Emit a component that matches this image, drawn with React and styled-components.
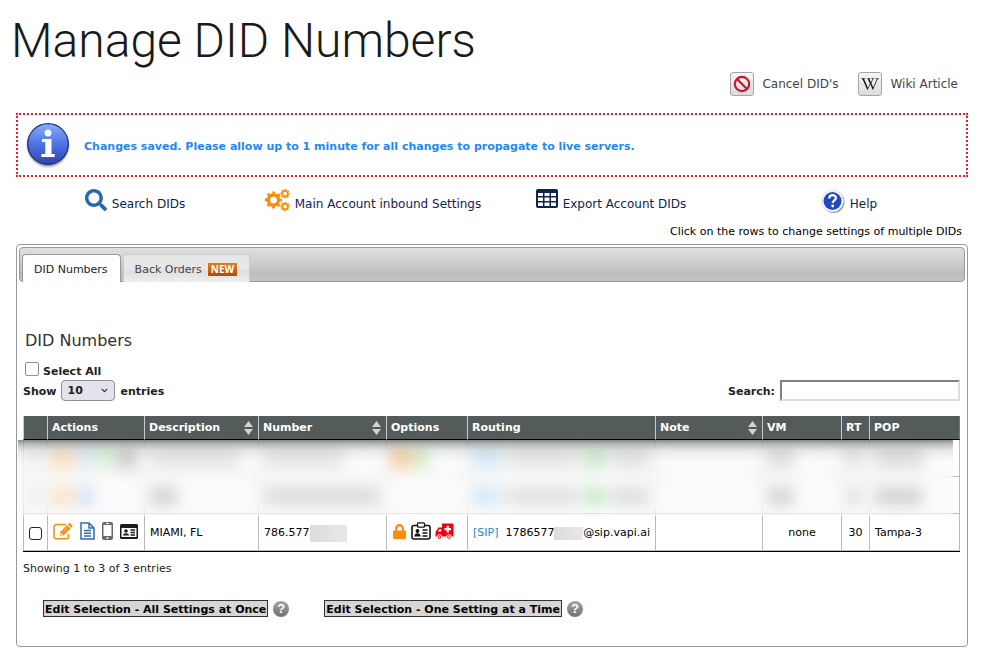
import styled, { createGlobalStyle } from "styled-components";
import { FaSearch, FaWikipediaW, FaLock, FaChevronDown } from "react-icons/fa";

const GlobalStyle = createGlobalStyle`
    * {
        box-sizing: border-box;
    }

    body {
        margin: 0;
        background-color: #fff;
        color: #222;
        font-family: Verdana, "DejaVu Sans", sans-serif;
        font-size: 11px;
        line-height: 16px;
    }

    input, select, button {
        font: inherit;
        color: inherit;
        margin: 0;
    }

    svg {
        display: block;
        flex: none;
    }
`;

const Page = styled.main`
    padding: 11px 34px 14px 16px;
`;

const Title = styled.h1`
    margin: 0 0 1px -5px;
    font-family: Roboto, sans-serif;
    font-size: 48px;
    font-weight: 350;
    line-height: 60px;
    color: #1a1a1a;
`;

const TopActions = styled.nav`
    display: flex;
    justify-content: flex-end;
    gap: 20px;
    padding-right: 10px;
`;

const TopAction = styled.a`
    display: flex;
    align-items: center;
    gap: 8px;
    font-size: 12px;
    color: #444;
    text-decoration: none;
`;

const IconTile = styled.span`
    width: 24px;
    height: 24px;
    display: flex;
    justify-content: center;
    align-items: center;
    border: 1px solid #a5a5a5;
    border-radius: 3px;
    background: linear-gradient(#f6f6f6, #dcdcdc);
    color: #111;
`;

const Notice = styled.section`
    display: flex;
    align-items: center;
    gap: 12px;
    height: 64px;
    margin-top: 17px;
    padding-left: 8px;
    border: 2px dotted #ed1c24;
    color: #1e88ff;
    font-weight: bold;

    span {
        padding-top: 4px;
    }
`;

const Shortcuts = styled.nav`
    display: grid;
    grid-template-columns: repeat(4, 1fr);
    height: 47px;
    padding-top: 12px;
`;

const Shortcut = styled.a`
    display: flex;
    justify-content: center;
    align-items: flex-start;
    gap: 5px;
    font-size: 12px;
    color: #0f2350;
    text-decoration: none;

    span {
        padding-top: 7px;
    }
`;

const Hint = styled.p`
    margin: 0 6px 4px 0;
    text-align: right;
    color: #000;
`;

const Panel = styled.section`
    padding: 2px;
    border: 1px solid #999;
    border-radius: 4px;
`;

const TabBar = styled.div`
    display: flex;
    align-items: flex-end;
    gap: 2px;
    height: 35px;
    padding-left: 2px;
    border: 1px solid #999;
    border-radius: 4px;
    background: linear-gradient(#e0e0e0, #cfcfcf 40%, #bebebe 75%, #c2c2c2);
`;

const Tab = styled.button`
    display: flex;
    align-items: center;
    gap: 6px;
    height: 28px;
    margin-bottom: -1px;
    padding: 2px 12px 0 11px;
    border: 1px solid ${(props) => (props.$active ? "#999" : "#ccc")};
    border-bottom: none;
    border-radius: 4px 4px 0 0;
    background: ${(props) =>
        props.$active ? "#fff" : "linear-gradient(#e7e7e7 55%, #dedede 55%, #ededed)"};
    color: ${(props) => (props.$active ? "#222" : "#444")};
`;

const NewBadge = styled.b`
    padding: 0 3px;
    background: linear-gradient(#e08020, #bd4408);
    color: #fff;
    font-family: "Open Sans", sans-serif;
    font-size: 10px;
    line-height: 13px;
`;

const PanelBody = styled.div`
    padding: 49px 5px 27px 4px;
`;

const Heading = styled.h2`
    margin: 0 0 9px 2px;
    font-size: 16px;
    font-weight: normal;
    line-height: 20px;
    color: #333;
`;

const CheckBox = styled.input`
    appearance: none;
    flex: none;
    width: ${(props) => (props.$small ? 13 : 14)}px;
    height: ${(props) => (props.$small ? 13 : 14)}px;
    border: 1px solid ${(props) => (props.$small ? "#222" : "#8f8f9d")};
    border-radius: ${(props) => (props.$small ? 3 : 2)}px;
    background-color: #fff;

    &:checked {
        background-color: #0060df;
    }
`;

const SelectAll = styled.label`
    display: flex;
    gap: 4px;
    height: 20px;
    padding: 2px 0 0 2px;
    font-weight: bold;

    span {
        padding-top: 2px;
    }
`;

const Controls = styled.div`
    display: flex;
    justify-content: space-between;
    margin-bottom: 15px;
    font-weight: bold;
`;

const Control = styled.label`
    display: flex;
    align-items: center;
    gap: 5px;

    > span {
        padding-top: 2px;
    }
`;

const SelectBox = styled.div`
    position: relative;
    display: flex;

    select {
        appearance: none;
        width: 54px;
        height: 21px;
        padding: 1px 5px 0;
        border: 1px solid #8f8f9d;
        border-radius: 4px;
        background-color: #e4e3ea;
    }

    svg {
        position: absolute;
        right: 7px;
        top: 7px;
        pointer-events: none;
    }
`;

const SearchInput = styled.input`
    width: 180px;
    height: 21px;
    padding: 0 4px;
    border: 2px solid;
    border-color: #808080 #ddd #ddd #808080;
    background-color: #fff;
`;

const TableBox = styled.div`
    position: relative;
`;

const DidTable = styled.table`
    width: 100%;
    table-layout: fixed;
    border-spacing: 0;
    border-bottom: 1px solid #000;
    color: #000;
`;

const HeadCell = styled.th`
    width: ${(props) => props.$width}px;
    height: 24px;
    padding: 1px 5px 0 4px;
    border-left: 1px solid #ccc;
    border-bottom: 1px solid #000;
    background-color: #535c5b;
    color: #fff;
    text-align: left;

    &:last-child {
        border-right: 1px solid #777;
    }
`;

const HeadLabel = styled.span`
    display: flex;
    justify-content: space-between;
    align-items: center;
`;

const Cell = styled.td`
    height: 37px;
    padding: 2px 5px 0;
    border-left: 1px solid #bbb;
    border-bottom: 1px solid #bbb;
    text-align: ${(props) => props.$align || "left"};
    white-space: nowrap;

    &:last-child {
        border-right: 1px solid #bbb;
    }
`;

const CellContent = styled.div`
    display: flex;
    align-items: center;
    gap: ${(props) => props.$gap || 0}px;
`;

const CellIcons = styled(CellContent)`
    padding-bottom: 4px;
`;

const Smear = styled.span`
    display: block;
    flex: none;
    width: ${(props) => props.$width}px;
    height: 16px;
    background-color: ${(props) => props.$color || "#bbb"};
`;

const Redaction = styled.div`
    position: absolute;
    top: 24px;
    left: -5px;
    right: 7px;
    height: 76px;
    background: linear-gradient(
        rgba(90, 98, 96, 0.7),
        rgba(120, 126, 124, 0.4) 5px,
        rgba(190, 194, 192, 0.3) 11px,
        rgba(245, 245, 245, 0.3) 22px,
        rgba(250, 250, 250, 0.3)
    );
    backdrop-filter: blur(8px);
`;

const Mask = styled.span`
    width: ${(props) => props.$width}px;
    height: ${(props) => props.$height}px;
    background: linear-gradient(90deg, #dcdcdc, #e8e8e8);
`;

const SipLink = styled.a`
    margin-right: 7px;
    color: #2a86c8;
    text-decoration: none;
`;

const Summary = styled.p`
    margin: 9px 0 23px;
`;

const BulkActions = styled.div`
    display: flex;
    gap: 35px;
    padding-left: 20px;
`;

const BulkAction = styled.div`
    display: flex;
    align-items: center;
    gap: 5px;
`;

const EditButton = styled.button`
    height: 17px;
    padding: 1px 1px 0;
    border: 1px solid #333;
    background-color: #d6d6d6;
    color: #000;
    font-weight: bold;
    line-height: 15px;
`;

const HelpButton = styled.button`
    width: 16px;
    height: 16px;
    padding: 0;
    border: none;
    border-radius: 50%;
    background: linear-gradient(#a5a5a5, #707074);
    color: #fff;
    font-family: "Liberation Sans", sans-serif;
    font-size: 13px;
    font-weight: bold;
    line-height: 16px;
`;

const InfoIcon = () => (
    <svg width="46" height="48" viewBox="0 0 46 48">
        <defs>
            <linearGradient id="info" x1="0" y1="0" x2="0" y2="1">
                <stop offset="0" stopColor="#86aefb" />
                <stop offset="0.5" stopColor="#4f74e4" />
                <stop offset="1" stopColor="#2f44b0" />
            </linearGradient>
            <filter id="soft" x="-20%" y="-20%" width="140%" height="140%">
                <feGaussianBlur stdDeviation="1.2" />
            </filter>
        </defs>
        <circle cx="22" cy="25" r="20.5" fill="#555" filter="url(#soft)" opacity="0.7" />
        <circle cx="22" cy="23" r="20.3" fill="url(#info)" stroke="#1f2f7c" strokeWidth="1.3" />
        <circle cx="22" cy="12" r="3.4" fill="#fff" />
        <path d="M16 18h9.5v15h3.200v3H15.400v-3h3.900V21H16z" fill="#fff" />
    </svg>
);

const CancelIcon = () => (
    <svg width="18" height="18" viewBox="0 0 18 18" fill="none" stroke="#d0142c" strokeWidth="2.2">
        <circle cx="9" cy="9" r="7.2" />
        <path d="M4 4l10 10" />
    </svg>
);

const Gear = ({ x, y, r }) => {
    const tooth = (Math.PI * r * 0.88) / 8;
    return (
        <g transform={`translate(${x} ${y}) rotate(-11)`}>
            <circle r={r * 0.6} strokeWidth={r * 0.4} />
            <circle r={r * 0.88} strokeWidth={r * 0.24} strokeDasharray={tooth} />
        </g>
    );
};

const CogsIcon = () => (
    <svg width="25" height="23" viewBox="0 0 25 23" fill="none" stroke="#fb8c0c">
        <Gear x={8.5} y={11} r={8.5} />
        <Gear x={20} y={4.700} r={4.700} />
        <Gear x={20} y={17.500} r={4.700} />
    </svg>
);

const TableIcon = () => (
    <svg width="22" height="19" viewBox="0 0 22 19">
        <rect width="22" height="19" rx="2" fill="#0f2350" />
        <path
            d="M2 4h5v3H2zM8.5 4h5v3h-5zM15 4h5v3h-5zM2 8.5h5v3.500H2zM8.500 8.500h5v3.500h-5zM15 8.500h5v3.500h-5zM2 13.500h5v3.500H2zM8.500 13.500h5v3.500h-5zM15 13.500h5v3.500h-5z"
            fill="#fff"
        />
    </svg>
);

const HelpIcon = () => (
    <svg width="24" height="25" viewBox="0 0 24 25">
        <circle cx="12.500" cy="13" r="11" fill="#8b8b8b" />
        <circle cx="11.500" cy="12" r="11" fill="#f4f7ff" stroke="#c9d4e6" strokeWidth="0.600" />
        <circle cx="11.500" cy="12" r="9" fill="#2249bf" />
        <path
            d="M8.300 9.400c0-4.200 6.600-4.200 6.600-0.300 0 2.500-3.200 2.300-3.200 5"
            fill="none"
            stroke="#fff"
            strokeWidth="2.200"
        />
        <circle cx="11.700" cy="17" r="1.400" fill="#fff" />
    </svg>
);

const SortIcon = () => (
    <svg width="9" height="16" viewBox="0 0 9 16" fill="#d3d3d3">
        <path d="M4.500 1L9 7H0zM4.500 15L0 9h9z" />
    </svg>
);

const EditIcon = () => (
    <svg width="20" height="17" viewBox="0 0 20 17">
        <path
            d="M13 1.500H3.500a2.500 2.500 0 0 0-2.500 2.500v9.300a2.500 2.500 0 0 0 2.500 2.500h9.500a2.500 2.500 0 0 0 2.500-2.500V11"
            fill="none"
            stroke="#fb8c0c"
            strokeWidth="1.500"
        />
        <path d="M7 9l7-7 3.500 3.500-7 7H7zM14.800 1.200l1-1q0.700-0.400 1.400 0L19.300 2.300q0.500 0.700 0 1.400l-1 1z" fill="#fb8c0c" />
        <path d="M8 9.800v1.700h1.800" fill="none" stroke="#fff" />
        <path d="M10 8.700l4.500-4.500" stroke="#fff" strokeWidth="0.600" />
    </svg>
);

const FileIcon = () => (
    <svg width="15" height="18" viewBox="0 0 15 18" fill="none" stroke="#2c6cb8" strokeWidth="1.500">
        <path d="M1 1h8l5 5v11H1zM9 1v5h5M4 8.500h7M4 11.300h7M4 14h7" />
    </svg>
);

const PhoneIcon = () => (
    <svg width="11" height="18" viewBox="0 0 11 18">
        <rect width="11" height="18" rx="2" fill="#6b6b6b" />
        <path d="M1.500 3h8v11h-8z" fill="#fff" />
        <path d="M4 1.500h3" stroke="#fff" />
        <circle cx="5.500" cy="16" r="1" fill="#fff" />
    </svg>
);

const ContactIcon = () => (
    <svg width="18" height="15" viewBox="0 0 18 15">
        <rect width="18" height="15" rx="1.500" fill="#1b1b1b" />
        <path d="M1.500 4h15v9h-15z" fill="#fff" />
        <circle cx="6" cy="7" r="1.800" fill="#1b1b1b" />
        <path d="M3 11.500c0-3 6-3 6 0z" fill="#1b1b1b" />
        <path d="M10.500 6h4.500M10.500 8.500h4.500M10.500 11h4.500" stroke="#1b1b1b" strokeWidth="1.300" />
    </svg>
);

const BadgeIcon = () => (
    <svg width="20" height="18" viewBox="0 0 20 18">
        <rect x="1" y="3.500" width="18" height="13.500" rx="2" fill="#fff" stroke="#111" strokeWidth="1.600" />
        <rect x="6.500" y="0.800" width="7" height="4.400" rx="1" fill="#fff" stroke="#111" strokeWidth="1.300" />
        <circle cx="6.500" cy="9" r="1.900" fill="#111" />
        <path d="M3.300 14.500c0-4.500 6.400-4.500 6.400 0z" fill="#111" />
        <path d="M11.500 8h5M11.500 11h5M11.500 14h5" stroke="#111" strokeWidth="1.300" />
    </svg>
);

const AmbulanceIcon = () => (
    <svg width="19" height="18" viewBox="0 0 19 18" fill="#f3000f">
        <path d="M7 1.500h11.500v13H0.500V10L3.500 5.500H7z" />
        <path d="M2.800 9.500L4.600 7h1.600v2.500zM11.600 3.800h2.200v2.200h2.200v2.200h-2.200v2.200h-2.200V8.200H9.400V6h2.200z" fill="#fff" />
        <circle cx="4.500" cy="15" r="2.300" stroke="#fff" />
        <circle cx="14" cy="15" r="2.300" stroke="#fff" />
        <circle cx="4.500" cy="15" r="0.900" fill="#fff" />
        <circle cx="14" cy="15" r="0.900" fill="#fff" />
    </svg>
);

const columns = [
    { name: "", width: 24 },
    { name: "Actions", width: 97 },
    { name: "Description", width: 114, sortable: true },
    { name: "Number", width: 128, sortable: true },
    { name: "Options", width: 81 },
    { name: "Routing", width: 188 },
    { name: "Note", width: 107, sortable: true },
    { name: "VM", width: 79 },
    { name: "RT", width: 28 },
    { name: "POP", width: 91 },
];

// Each cell is a list of [width, colour] blocks
const hiddenRows = [
    [
        [[13, "#e4e4e4"]],
        [[20, "#fbc98a"], [14, "#b4d0f0"], [14, "#b0e4a8"], [16, "#999"]],
        [[90, "#d8d8d8"]],
        [[80, "#d8d8d8"]],
        [[18, "#f2a848"], [10, "#98d870"]],
        [[28, "#b8dcf6"], [72, "#d8d8d8"], [20, "#a0dca0"], [38, "#d4d4d4"]],
        [],
        [[26, "#ccc"]],
        [[14, "#ccc"]],
        [[48, "#ccc"]],
    ],
    [
        [[13, "#e0e0e0"]],
        [[20, "#fbd09a"], [14, "#a8c8ee"]],
        [[28, "#bbb"]],
        [[116, "#c8c8c8"]],
        [],
        [[28, "#b8dcf6"], [72, "#d0d0d0"], [20, "#a0dca0"], [38, "#ccc"]],
        [],
        [[26, "#bbb"]],
        [[14, "#ccc"]],
        [[48, "#bbb"]],
    ],
];

const App = () => {
    return (
        <>
            <GlobalStyle />
            <Page>
                <Title>Manage DID Numbers</Title>
                <TopActions>
                    <TopAction href="#cancel">
                        <IconTile>
                            <CancelIcon />
                        </IconTile>
                        Cancel DID's
                    </TopAction>
                    <TopAction href="#wiki">
                        <IconTile>
                            <FaWikipediaW size={18} />
                        </IconTile>
                        Wiki Article
                    </TopAction>
                </TopActions>
                <Notice>
                    <InfoIcon />
                    <span>
                        Changes saved. Please allow up to 1 minute for all changes to propagate to live servers.
                    </span>
                </Notice>
                <Shortcuts>
                    <Shortcut href="#search">
                        <FaSearch size={22} color="#2868ad" />
                        <span>Search DIDs</span>
                    </Shortcut>
                    <Shortcut href="#settings">
                        <CogsIcon />
                        <span>Main Account inbound Settings</span>
                    </Shortcut>
                    <Shortcut href="#export">
                        <TableIcon />
                        <span>Export Account DIDs</span>
                    </Shortcut>
                    <Shortcut href="#help">
                        <HelpIcon />
                        <span>Help</span>
                    </Shortcut>
                </Shortcuts>
                <Hint>Click on the rows to change settings of multiple DIDs</Hint>
                <Panel>
                    <TabBar>
                        <Tab type="button" $active>
                            DID Numbers
                        </Tab>
                        <Tab type="button">
                            Back Orders <NewBadge>NEW</NewBadge>
                        </Tab>
                    </TabBar>
                    <PanelBody>
                        <Heading>DID Numbers</Heading>
                        <SelectAll>
                            <CheckBox type="checkbox" />
                            <span>Select All</span>
                        </SelectAll>
                        <Controls>
                            <Control>
                                <span>Show</span>
                                <SelectBox>
                                    <select defaultValue="10">
                                        <option>10</option>
                                        <option>25</option>
                                        <option>50</option>
                                    </select>
                                    <FaChevronDown size={7} />
                                </SelectBox>
                                <span>entries</span>
                            </Control>
                            <Control>
                                <span>Search:</span>
                                <SearchInput type="text" />
                            </Control>
                        </Controls>
                        <TableBox>
                            <DidTable>
                                <thead>
                                    <tr>
                                        {columns.map((column) => (
                                            <HeadCell key={column.name} $width={column.width}>
                                                <HeadLabel>
                                                    {column.name}
                                                    {column.sortable && <SortIcon />}
                                                </HeadLabel>
                                            </HeadCell>
                                        ))}
                                    </tr>
                                </thead>
                                <tbody>
                                    {hiddenRows.map((row, rowIndex) => (
                                        <tr key={rowIndex}>
                                            {row.map((blocks, cellIndex) => (
                                                <Cell key={cellIndex} $align="center">
                                                    <CellContent $gap={6}>
                                                        {blocks.map(([width, color], index) => (
                                                            <Smear key={index} $width={width} $color={color} />
                                                        ))}
                                                    </CellContent>
                                                </Cell>
                                            ))}
                                        </tr>
                                    ))}
                                    <tr>
                                        <Cell>
                                            <CellContent>
                                                <CheckBox type="checkbox" aria-label="MIAMI, FL" $small />
                                            </CellContent>
                                        </Cell>
                                        <Cell>
                                            <CellIcons $gap={7}>
                                                <EditIcon />
                                                <FileIcon />
                                                <PhoneIcon />
                                                <ContactIcon />
                                            </CellIcons>
                                        </Cell>
                                        <Cell>MIAMI, FL</Cell>
                                        <Cell>
                                            <CellContent>
                                                786.577
                                                <Mask $width={37} $height={17} />
                                            </CellContent>
                                        </Cell>
                                        <Cell>
                                            <CellIcons $gap={4}>
                                                <FaLock size={15} color="#fb8c0c" />
                                                <BadgeIcon />
                                                <AmbulanceIcon />
                                            </CellIcons>
                                        </Cell>
                                        <Cell>
                                            <CellContent>
                                                <SipLink href="#sip">[SIP]</SipLink>
                                                1786577
                                                <Mask $width={30} $height={13} />
                                                @sip.vapi.ai
                                            </CellContent>
                                        </Cell>
                                        <Cell />
                                        <Cell $align="center">none</Cell>
                                        <Cell $align="center">30</Cell>
                                        <Cell>Tampa-3</Cell>
                                    </tr>
                                </tbody>
                            </DidTable>
                            <Redaction />
                        </TableBox>
                        <Summary>Showing 1 to 3 of 3 entries</Summary>
                        <BulkActions>
                            <BulkAction>
                                <EditButton type="button">Edit Selection - All Settings at Once</EditButton>
                                <HelpButton type="button">?</HelpButton>
                            </BulkAction>
                            <BulkAction>
                                <EditButton type="button">Edit Selection - One Setting at a Time</EditButton>
                                <HelpButton type="button">?</HelpButton>
                            </BulkAction>
                        </BulkActions>
                    </PanelBody>
                </Panel>
            </Page>
        </>
    );
};

export default App;
